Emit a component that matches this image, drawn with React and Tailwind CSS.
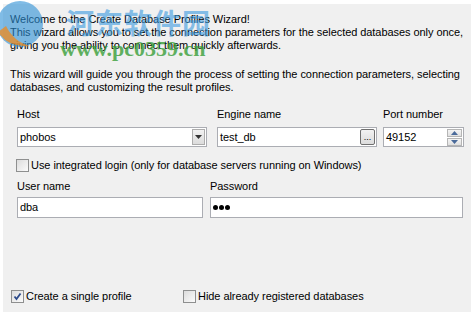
import React from "react";

function Check({ checked }) {
  return (
    <span className="inline-block w-[13px] h-[13px] border border-[#8e8f8f] bg-gradient-to-br from-[#dcdcdc] to-[#fbfbfb] relative shrink-0">
      {checked && (
        <svg viewBox="0 0 11 11" className="absolute left-0 top-0 w-[11px] h-[11px]">
          <path d="M2.5 5.5 L4.5 8 L8.5 2.5" stroke="#2c4a8a" strokeWidth="1.8" fill="none" />
        </svg>
      )}
    </span>
  );
}

export default function App() {
  return (
    <div className="w-[471px] h-[322px] bg-white relative overflow-hidden" style={{ fontFamily: '"Liberation Sans", Arial, sans-serif' }}>
      <div className="absolute left-[3px] top-[4px] right-0 bottom-[10px] bg-[#f0f0f0]" />
      <div className="relative ml-[3px] mt-[4px] w-[468px] h-[308px] text-[11px] leading-[13px] text-black tracking-[-0.06px]">
        <div className="pl-[7px] pt-[9px]">
          <div>Welcome to the Create Database Profiles Wizard!</div>
          <div>This wizard allows you to set the connection parameters for the selected databases only once,</div>
          <div>giving you the ability to connect them quickly afterwards.</div>
          <div className="mt-[16px]">This wizard will guide you through the process of setting the connection parameters, selecting</div>
          <div>databases, and customizing the result profiles.</div>
        </div>
        <div className="flex pl-[14px] mt-[14px]">
          <div className="w-[190px]">
            <div className="h-[14px]">Host</div>
            <div className="mt-[5px] h-[20px] border border-[#abadb3] bg-white flex items-center justify-between pl-[2px] pr-[1px]">
              <span>phobos</span>
              <span className="w-[13px] h-[16px] border border-[#adadad] bg-gradient-to-b from-[#f2f2f2] to-[#dcdcdc] flex items-center justify-center">
                <svg width="7" height="4" viewBox="0 0 7 4"><path d="M0 0 H7 L3.5 4 Z" fill="#333" /></svg>
              </span>
            </div>
          </div>
          <div className="w-[160px] ml-[10px]">
            <div className="h-[14px]">Engine name</div>
            <div className="mt-[5px] h-[20px] border border-[#abadb3] bg-white flex items-center justify-between pl-[2px] pr-[1px]">
              <span>test_db</span>
              <span className="w-[15px] h-[16px] border border-[#707070] rounded-[2px] bg-gradient-to-b from-[#f2f2f2] to-[#dcdcdc] flex items-center justify-center text-[9px] leading-[8px]">...</span>
            </div>
          </div>
          <div className="w-[81px] ml-[6px]">
            <div className="h-[14px]">Port number</div>
            <div className="mt-[5px] h-[20px] border border-[#abadb3] bg-white flex items-center justify-between pl-[2px] pr-[1px]">
              <span>49152</span>
              <span className="flex flex-col gap-[1px]">
                <span className="w-[15px] h-[8px] border border-[#b5b5b5] bg-gradient-to-b from-[#f4f4f4] to-[#e0e0e0] flex items-center justify-center">
                  <svg width="7" height="4" viewBox="0 0 7 4"><path d="M0 4 H7 L3.5 0 Z" fill="#4a6a9a" /></svg>
                </span>
                <span className="w-[15px] h-[8px] border border-[#b5b5b5] bg-gradient-to-b from-[#f4f4f4] to-[#e0e0e0] flex items-center justify-center">
                  <svg width="7" height="4" viewBox="0 0 7 4"><path d="M0 0 H7 L3.5 4 Z" fill="#4a6a9a" /></svg>
                </span>
              </span>
            </div>
          </div>
        </div>
        <div className="flex items-center gap-[2px] pl-[13px] mt-[12px]">
          <Check />
          <span>Use integrated login (only for database servers running on Windows)</span>
        </div>
        <div className="flex pl-[14px] mt-[8px]">
          <div className="w-[186px]">
            <div className="h-[14px]">User name</div>
            <div className="mt-[3px] h-[21px] border border-[#abadb3] bg-white flex items-center pl-[2px]">dba</div>
          </div>
          <div className="w-[253px] ml-[7px]">
            <div className="h-[14px]">Password</div>
            <div className="mt-[3px] h-[21px] border border-[#abadb3] bg-white flex items-center pl-[2px] gap-[1px]">
              <span className="w-[5px] h-[5px] rounded-full bg-black" />
              <span className="w-[5px] h-[5px] rounded-full bg-black" />
              <span className="w-[5px] h-[5px] rounded-full bg-black" />
            </div>
          </div>
        </div>
        <div className="flex items-center pl-[8px] mt-[72px]">
          <div className="flex items-center gap-[2px] w-[172px]">
            <Check checked />
            <span>Create a single profile</span>
          </div>
          <div className="flex items-center gap-[2px]">
            <Check />
            <span>Hide already registered databases</span>
          </div>
        </div>
      </div>
      <div className="absolute left-0 top-0 w-[220px] h-[70px] pointer-events-none">
        <svg className="absolute left-[-6px] top-[-4px]" width="54" height="56" viewBox="0 0 54 56">
          <circle cx="26" cy="28" r="23" fill="#2b8fd6" opacity="0.6" />
          <path d="M4 36 Q14 52 36 50 Q20 46 12 30 Z" fill="#f08a1c" opacity="0.75" />
        </svg>
        <div className="absolute left-[66px] top-[6px] text-[28px] leading-[32px] font-bold text-[#3b9be0] opacity-60 tracking-[1px]" style={{ fontFamily: '"Noto Sans CJK SC", sans-serif' }}>河东软件园</div>
        <div className="absolute left-[60px] top-[37px] text-[22px] leading-[24px] font-bold text-[#3aa03a] opacity-80" style={{ fontFamily: '"Liberation Serif", serif' }}>www.pc0359.cn</div>
      </div>
    </div>
  );
}
